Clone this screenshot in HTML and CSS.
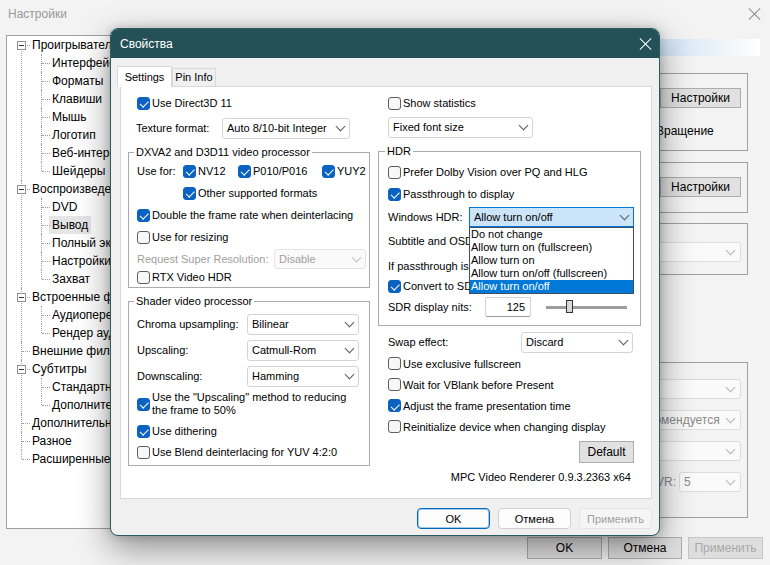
FILE: index.html
```html
<!doctype html>
<html>
<head>
<meta charset="utf-8">
<title>Настройки</title>
<link rel="stylesheet" href="styles.css">
</head>
<body>

<!-- background window: MPC options -->
<div class="win">
  <div class="win-title">
    <span>Настройки</span>
    <span class="x"></span>
  </div>

  <div class="win-body">
    <ul class="tree">
      <li class="node"><span class="exp"></span>Проигрыватель
        <ul>
          <li>Интерфейс</li>
          <li>Форматы</li>
          <li>Клавиши</li>
          <li>Мышь</li>
          <li>Логотип</li>
          <li>Веб-интерфейс</li>
          <li>Шейдеры</li>
        </ul>
      </li>
      <li class="node"><span class="exp"></span>Воспроизведение
        <ul>
          <li>DVD</li>
          <li><span class="picked">Вывод</span></li>
          <li>Полный экран</li>
          <li>Настройки</li>
          <li>Захват</li>
        </ul>
      </li>
      <li class="node"><span class="exp"></span>Встроенные фильтры
        <ul>
          <li>Аудиопереключатель</li>
          <li>Рендер аудио</li>
        </ul>
      </li>
      <li>Внешние фильтры</li>
      <li class="node"><span class="exp"></span>Субтитры
        <ul>
          <li>Стандартные</li>
          <li>Дополнительно</li>
        </ul>
      </li>
      <li>Дополнительно</li>
      <li>Разное</li>
      <li>Расширенные</li>
    </ul>

    <div class="pane">
      <div class="pane-head"></div>

      <div class="bgrp g1">
        <div class="bcol">
          <button class="btn btn-set">Настройки</button>
          <div class="bline">Вращение</div>
        </div>
      </div>

      <div class="bgrp g2">
        <button class="btn btn-set">Настройки</button>
      </div>

      <div class="bgrp g3">
        <span class="bsel bsel-wide"></span>
      </div>

      <div class="bgrp g4">
        <span class="bsel bsel-wide"></span>
        <span class="bsel bsel-wide">Не рекомендуется</span>
        <span class="bsel bsel-wide"></span>
        <div class="brow"><span class="blbl">VR:</span><span class="bsel bsel-small">5</span></div>
      </div>
    </div>
  </div>

  <div class="win-foot">
    <button class="btn w75">OK</button>
    <button class="btn w74">Отмена</button>
    <button class="btn w75" disabled>Применить</button>
  </div>
</div>

<!-- foreground dialog: renderer properties -->
<div class="dlg">
  <div class="dlg-title">
    <span>Свойства</span>
    <span class="x x-white"></span>
  </div>

  <div class="dlg-body">
    <div class="tabs">
      <span class="tab on">Settings</span>
      <span class="tab">Pin Info</span>
    </div>

    <div class="panel">
      <div class="col">
        <div class="row r18 pl9"><span class="cb on"><i></i>Use Direct3D 11</span></div>
        <div class="row r22 pl8 mt5"><span class="lbl w86">Texture format:</span><span class="sel w128">Auto 8/10-bit Integer</span></div>

        <fieldset class="grp mt5">
          <legend>DXVA2 and D3D11 video processor</legend>
          <div class="row r22">
            <span class="lbl w46">Use for:</span>
            <span class="cb on w55"><i></i>NV12</span>
            <span class="cb on w84"><i></i>P010/P016</span>
            <span class="cb on"><i></i>YUY2</span>
          </div>
          <div class="row r22 pl46"><span class="cb on"><i></i>Other supported formats</span></div>
          <div class="row r22"><span class="cb on"><i></i>Double the frame rate when deinterlacing</span></div>
          <div class="row r22"><span class="cb"><i></i>Use for resizing</span></div>
          <div class="row r22"><span class="lbl off w137">Request Super Resolution:</span><span class="sel off w92">Disable</span></div>
          <div class="row r14"><span class="cb"><i></i>RTX Video HDR</span></div>
        </fieldset>

        <fieldset class="grp grp-shader mt5">
          <legend>Shader video processor</legend>
          <div class="row r26 mt2"><span class="lbl w110">Chroma upsampling:</span><span class="sel w112">Bilinear</span></div>
          <div class="row r26"><span class="lbl w110">Upscaling:</span><span class="sel w112">Catmull-Rom</span></div>
          <div class="row r26"><span class="lbl w110">Downscaling:</span><span class="sel w112">Hamming</span></div>
          <div class="row r30"><span class="cb on"><i></i><span class="two">Use the "Upscaling" method to reducing<br>the frame to 50%</span></span></div>
          <div class="row r24"><span class="cb on"><i></i>Use dithering</span></div>
          <div class="row r18"><span class="cb"><i></i>Use Blend deinterlacing for YUV 4:2:0</span></div>
        </fieldset>
      </div>

      <div class="col">
        <div class="row r18 pl10"><span class="cb"><i></i>Show statistics</span></div>
        <div class="row r20 pl10 mt5"><span class="sel w145">Fixed font size</span></div>

        <fieldset class="grp grp-hdr mt6">
          <legend>HDR</legend>
          <div class="row r22 mt2"><span class="cb"><i></i>Prefer Dolby Vision over PQ and HLG</span></div>
          <div class="row r22"><span class="cb on"><i></i>Passthrough to display</span></div>
          <div class="row r24">
            <span class="lbl w81">Windows HDR:</span>
            <div class="combo">
              <span class="sel open w165">Allow turn on/off</span>
              <div class="dd">
                <div>Do not change</div>
                <div>Allow turn on (fullscreen)</div>
                <div>Allow turn on</div>
                <div>Allow turn on/off (fullscreen)</div>
                <div class="cur">Allow turn on/off</div>
              </div>
            </div>
          </div>
          <!-- these rows run on under the open list, so they are cut at its edge -->
          <div class="row r24"><span class="lbl clip w81">Subtitle and OSD</span></div>
          <div class="row r26"><span class="lbl clip w81">If passthrough is</span></div>
          <div class="row r14"><span class="cb on"><i></i><span class="clip w66">Convert to SD</span></span></div>
          <div class="row r28">
            <span class="lbl w97">SDR display nits:</span>
            <span class="num">125</span>
            <span class="slider"><b></b></span>
          </div>
        </fieldset>

        <div class="row r22 pl10 mt5"><span class="lbl w133">Swap effect:</span><span class="sel w112">Discard</span></div>
        <div class="row r21 pl10"><span class="cb"><i></i>Use exclusive fullscreen</span></div>
        <div class="row r21 pl10"><span class="cb"><i></i>Wait for VBlank before Present</span></div>
        <div class="row r21 pl10"><span class="cb on"><i></i>Adjust the frame presentation time</span></div>
        <div class="row r21 pl10"><span class="cb"><i></i>Reinitialize device when changing display</span></div>
        <div class="row r22 mt4 end pr7"><button class="cbtn">Default</button></div>
        <div class="row r16 mt6 end pr10">MPC Video Renderer 0.9.3.2363 x64</div>
      </div>
    </div>

    <div class="dlg-foot">
      <button class="wbtn def">OK</button>
      <button class="wbtn">Отмена</button>
      <button class="wbtn" disabled>Применить</button>
    </div>
  </div>
</div>

</body>
</html>
```

FILE: styles.css
```css
* {
  box-sizing: border-box;
}

body {
  margin: 0;
  width: 770px;
  height: 565px;
  overflow: hidden;
  position: relative;
  font-family: "Liberation Sans", Arial, sans-serif;
  font-size: 12px;
  color: #000;
  background: #f3f3f3;
}

button {
  font-family: inherit;
  color: #000;
  padding: 0;
}

/* close cross, drawn with two thin bars */
.x {
  width: 12px;
  height: 12px;
  position: relative;
  color: #8c8c8c;
}

.x::before,
.x::after {
  content: "";
  position: absolute;
  left: 5.5px;
  top: -2px;
  width: 1px;
  height: 16px;
  background: currentColor;
  transform: rotate(45deg);
}

.x::after {
  transform: rotate(-45deg);
}

.x-white {
  color: #fff;
}

/* ---------- background window ---------- */

.win {
  width: 770px;
  height: 565px;
  display: flex;
  flex-direction: column;
}

.win-title {
  height: 27px;
  display: flex;
  align-items: center;
  justify-content: space-between;
  padding: 0 10px 0 8px;
  color: #999;
}

.win-body {
  flex: 1;
  display: flex;
  padding: 8px 10px 0 6px;
  min-height: 0;
}

.win-foot {
  display: flex;
  justify-content: flex-end;
  gap: 6px;
  padding: 8px 7px 6px 0;
}

.btn {
  height: 22px;
  border: 1px solid #adadad;
  background: #e1e1e1;
  font-size: 12px;
}

.btn:disabled {
  color: #a8a8a8;
  background: #dedede;
  border-color: #c6c6c6;
}

.w75 { width: 75px; }
.w74 { width: 74px; }

/* tree view (its right part lies under the dialog) */
.tree {
  width: 112px;
  height: 494px;
  flex: none;
  margin: 0;
  padding: 0;
  list-style: none;
  background: #fff;
  border: 1px solid #a0a0a0;
  overflow: hidden;
}

.tree ul {
  margin: 0 0 0 -5px;
  padding: 0;
  list-style: none;
}

.tree li {
  position: relative;
  padding-left: 25px;
  line-height: 18px;
  white-space: nowrap;
}

.tree li::before {
  content: "";
  position: absolute;
  left: 14px;
  top: 0;
  bottom: 0;
  border-left: 1px dotted #a0a0a0;
}

.tree li:last-child::before {
  bottom: auto;
  height: 9px;
}

.tree > li:first-child::before {
  top: 9px;
}

.tree li::after {
  content: "";
  position: absolute;
  left: 15px;
  top: 9px;
  width: 8px;
  border-top: 1px dotted #a0a0a0;
}

.exp {
  position: absolute;
  left: 10px;
  top: 5px;
  width: 9px;
  height: 9px;
  border: 1px solid #919191;
  background: #fff;
  z-index: 1;
}

.exp::after {
  content: "";
  position: absolute;
  left: 1px;
  top: 3px;
  width: 5px;
  height: 1px;
  background: #333;
}

.picked {
  display: inline-block;
  background: #e5e5e5;
  padding: 0 3px;
  margin-left: -3px;
}

/* right page of the options */
.pane {
  flex: 1;
  margin-left: 8px;
  display: flex;
  flex-direction: column;
}

.pane-head {
  height: 17px;
  margin-top: 4px;
  background: linear-gradient(to right, #8fb6e2 0%, #d3e4f4 85%, #ffffff 100%);
}

.bgrp {
  border: 1px solid #a0a0a0;
  margin-right: 12px;
  display: flex;
  flex-direction: column;
  align-items: flex-end;
  padding-right: 6px;
}

.g1 { margin-top: 17px; height: 78px; padding-top: 14px; }
.g2 { margin-top: 11px; height: 51px; padding-top: 14px; }
.g3 { margin-top: 10px; height: 52px; padding-top: 18px; }
.g4 { margin-top: 87px; height: 156px; padding-top: 16px; gap: 11px; }

.bcol {
  width: 85px;
  display: flex;
  flex-direction: column;
  align-items: flex-end;
}

.btn-set {
  width: 81px;
  height: 20px;
}

.bline {
  align-self: flex-start;
  margin-top: 15px;
  line-height: 16px;
}

.bsel {
  height: 20px;
  border: 1px solid #dcdcdc;
  border-radius: 3px;
  background: #fafafa;
  color: #8a8a8a;
  padding-left: 4px;
  display: flex;
  align-items: center;
  position: relative;
}

.bsel::after {
  content: "";
  position: absolute;
  right: 6px;
  top: 4px;
  width: 6px;
  height: 6px;
  border-right: 1px solid #b4b4b4;
  border-bottom: 1px solid #b4b4b4;
  transform: rotate(45deg);
}

.bsel-wide { width: 129px; }
.bsel-small { width: 62px; }

.brow {
  display: flex;
  align-items: center;
}

.blbl {
  color: #8a8a8a;
  margin-right: 3px;
}

/* ---------- foreground dialog ---------- */

.dlg {
  position: absolute;
  left: 110px;
  top: 28px;
  width: 550px;
  height: 508px;
  border: 1px solid #2b5a60;
  border-radius: 8px;
  background: #f0f0f0;
  overflow: hidden;
  display: flex;
  flex-direction: column;
  box-shadow: 0 12px 34px rgba(0, 0, 0, 0.42), 0 0 10px rgba(0, 0, 0, 0.18);
}

.dlg-title {
  height: 29px;
  flex: none;
  background: #245057;
  color: #fff;
  display: flex;
  align-items: center;
  justify-content: space-between;
  padding: 0 8px 0 9px;
}

.dlg-body {
  flex: 1;
  padding: 8px 7px 0 9px;
  display: flex;
  flex-direction: column;
  font-size: 11px;
}

.tabs {
  height: 20px;
  display: flex;
  align-items: flex-end;
}

.tab {
  height: 18px;
  width: 44px;
  border: 1px solid #d9d9d9;
  border-bottom: none;
  background: #f0f0f0;
  line-height: 17px;
  text-align: center;
}

.tab.on {
  height: 21px;
  width: 55px;
  margin-left: -3px;
  margin-bottom: -1px;
  background: #fff;
  line-height: 20px;
  position: relative;
  z-index: 1;
}

.panel {
  height: 413px;
  background: #fff;
  border: 1px solid #d9d9d9;
  padding: 7px 10px 0 7px;
  display: grid;
  grid-template-columns: 242px 263px;
  column-gap: 8px;
  align-items: start;
}

.col {
  display: flex;
  flex-direction: column;
}

.row {
  display: flex;
  align-items: center;
  white-space: nowrap;
}

.r14 { height: 14px; }
.r16 { height: 16px; }
.r18 { height: 18px; }
.r20 { height: 20px; }
.r21 { height: 21px; }
.r22 { height: 22px; }
.r24 { height: 24px; }
.r26 { height: 26px; }
.r28 { height: 28px; }
.r30 { height: 30px; }

.mt2 { margin-top: 2px; }
.mt4 { margin-top: 4px; }
.mt5 { margin-top: 5px; }
.mt6 { margin-top: 6px; }
.pl8 { padding-left: 8px; }
.pl9 { padding-left: 9px; }
.pl10 { padding-left: 10px; }
.pl46 { padding-left: 46px; }
.pr7 { padding-right: 7px; }
.pr10 { padding-right: 10px; }
.end { justify-content: flex-end; }

.lbl { flex: none; }
.lbl.off { color: #a0a0a0; }

.clip {
  display: block;
  overflow: hidden;
  white-space: nowrap;
}

.w46 { width: 46px; }
.w55 { width: 55px; }
.w66 { width: 66px; }
.w81 { width: 81px; }
.w84 { width: 84px; }
.w86 { width: 86px; }
.w92 { width: 92px; }
.w97 { width: 97px; }
.w110 { width: 110px; }
.w112 { width: 112px; }
.w128 { width: 128px; }
.w133 { width: 133px; }
.w137 { width: 137px; }
.w145 { width: 145px; }
.w165 { width: 165px; }

/* group boxes */
.grp {
  margin-left: 0;
  margin-right: 0;
  min-width: 0;
  border: 1px solid #ababab;
  padding: 0 0 3px 8px;
}

.grp legend {
  padding: 0 2px;
  margin-left: -3px;
  line-height: 16px;
}

.grp-shader { padding-bottom: 4px; }
.grp-hdr { padding: 0 0 4px 9px; }

/* check boxes */
.cb {
  display: flex;
  align-items: center;
  flex: none;
}

.cb i {
  width: 13px;
  height: 13px;
  flex: none;
  margin-right: 2px;
  border: 1px solid #5d5d5d;
  border-radius: 3px;
  background: #f7f7f7;
  position: relative;
}

.cb.on i {
  background: #0b63c1;
  border-color: #0b63c1;
}

.cb.on i::after {
  content: "";
  position: absolute;
  left: 3.5px;
  top: 1.5px;
  width: 3.5px;
  height: 6.5px;
  border: solid #fff;
  border-width: 0 1.2px 1.2px 0;
  transform: rotate(45deg);
}

.two {
  line-height: 13px;
}

/* combo boxes */
.sel {
  height: 21px;
  flex: none;
  border: 1px solid #d4d4d4;
  border-radius: 3px;
  background: #fff;
  padding-left: 4px;
  display: flex;
  align-items: center;
  position: relative;
}

.sel::after {
  content: "";
  position: absolute;
  right: 5px;
  top: calc(50% - 5px);
  width: 6px;
  height: 6px;
  border-right: 1px solid #5a5a5a;
  border-bottom: 1px solid #5a5a5a;
  transform: rotate(45deg);
}

.sel.off {
  height: 20px;
  background: #fafafa;
  border-color: #e3e3e3;
  color: #a0a0a0;
}

.sel.off::after {
  border-color: #c0c0c0;
}

.sel.open {
  height: 20px;
  background: #cce4f7;
  border-color: #0078d7;
  border-radius: 0;
}

.combo {
  position: relative;
}

.dd {
  position: absolute;
  left: 0;
  top: 100%;
  width: 100%;
  background: #fff;
  border: 1px solid #3d4f63;
  z-index: 5;
}

.dd div {
  height: 13px;
  line-height: 13px;
  padding-left: 1px;
}

.dd .cur {
  background: #0078d7;
  color: #fff;
}

.num {
  width: 46px;
  height: 20px;
  flex: none;
  border: 1px solid #d4d4d4;
  border-bottom-color: #9a9a9a;
  border-radius: 2px;
  text-align: right;
  padding-right: 5px;
  line-height: 18px;
}

.slider {
  width: 81px;
  height: 14px;
  margin-left: 15px;
  position: relative;
  flex: none;
}

.slider::before {
  content: "";
  position: absolute;
  left: 0;
  right: 0;
  top: 6px;
  height: 3px;
  background: #9d9d9d;
}

.slider b {
  position: absolute;
  left: 20px;
  top: 0;
  width: 7px;
  height: 13px;
  background: #d8d8d8;
  border: 1px solid #333;
}

.cbtn {
  width: 55px;
  height: 22px;
  border: 1px solid #adadad;
  background: #e1e1e1;
  font-size: 12px;
}

.dlg-foot {
  display: flex;
  justify-content: flex-end;
  gap: 8px;
  padding-top: 9px;
}

.wbtn {
  width: 73px;
  height: 21px;
  border: 1px solid #d0d0d0;
  border-radius: 4px;
  background: #fdfdfd;
  font-size: 11px;
}

.wbtn.def {
  border-color: #0067c0;
  box-shadow: inset 0 0 0 1px rgba(0, 103, 192, 0.35);
}

.wbtn:disabled {
  color: #a0a0a0;
  background: #f5f5f5;
  border-color: #e5e5e5;
}
```
